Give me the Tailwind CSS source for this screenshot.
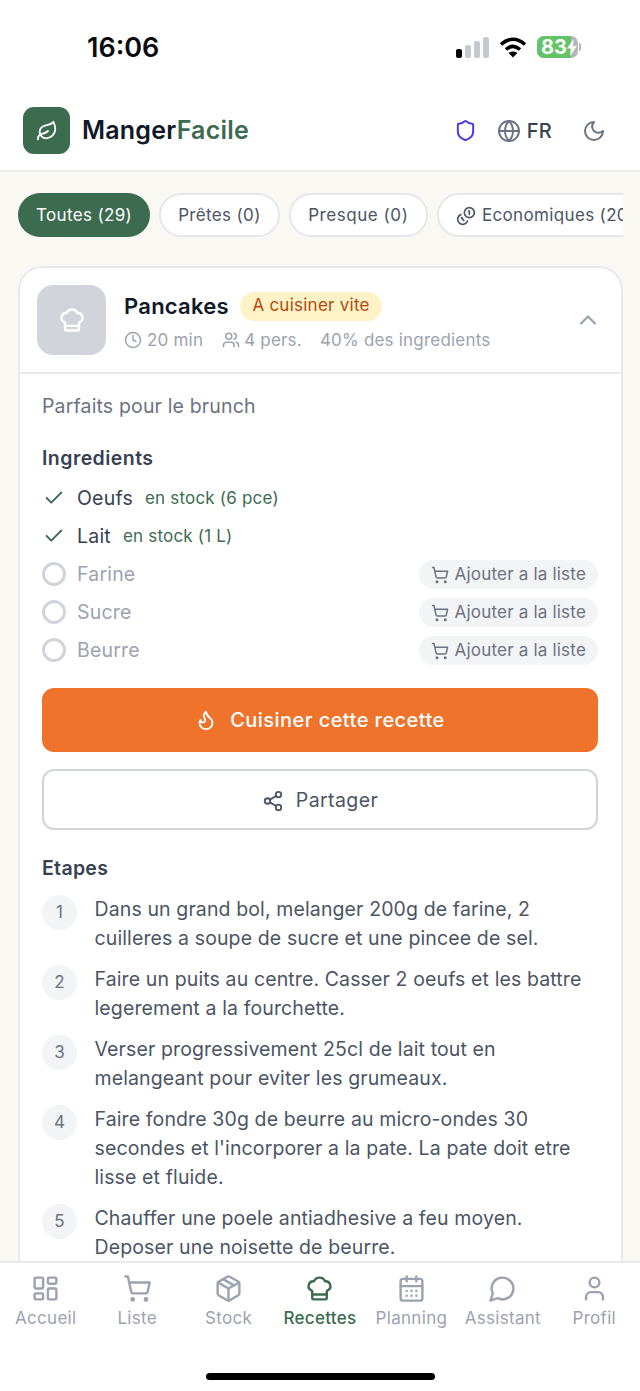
<!DOCTYPE html>
<html lang="fr">
<head>
<meta charset="utf-8">
<script src="https://cdn.jsdelivr.net/npm/@tailwindcss/browser@4"></script>
<title>MangerFacile</title>
</head>
<body class="m-0">
<div class="w-[640px] h-[1391px] flex flex-col overflow-hidden bg-white font-['Inter',sans-serif]">
  <!-- status bar -->
  <div class="h-[88px] shrink-0 relative flex items-start">
    <span class="ml-[87px] mt-[31px] text-[27px] leading-[33px] font-semibold text-[#0b0b0f]">16:06</span>
    <div class="ml-auto mr-[59px] mt-[36px] flex items-center gap-[10px]">
      <svg class="-ml-[2px]" width="33" height="21" viewBox="0 0 33 21"><rect x="0" y="12" width="6" height="9" rx="2" fill="#000"/><rect x="9" y="8" width="6" height="13" rx="2" fill="#c6c9ce"/><rect x="18" y="4" width="6" height="17" rx="2" fill="#c6c9ce"/><rect x="27" y="0" width="6" height="21" rx="2" fill="#c6c9ce"/></svg>
      <svg width="28" height="21" viewBox="0 0 28 21" fill="none" stroke="#000" stroke-width="3.6"><path d="M2 7.5C9.5 .5 18.5 .5 26 7.5"/><path d="M7 12.5c4.5-4 9.5-4 14 0"/><path d="M14 20.5l-4.4-4.6c2.7-2 6.1-2 8.8 0z" fill="#000" stroke="none"/></svg>
      <div class="flex items-center">
        <div class="relative w-[41px] h-[22px] rounded-[7px] overflow-hidden bg-[#b3b6bc] flex">
          <div class="w-[34px] h-full bg-[#62c466]"></div>
          <span class="absolute left-[4px] top-0 text-[20px] leading-[22px] font-bold text-white">83</span>
          <svg class="absolute left-[30px] top-[3px]" width="10" height="17" viewBox="0 0 10 17"><path d="M6.5 0 0 9.5h3.8L3 17l7-10H6z" fill="#fff"/></svg>
        </div>
        <div class="ml-[1px] w-[2px] h-[8px] rounded-r bg-[#b3b6bc]"></div>
      </div>
    </div>
  </div>

  <!-- header -->
  <header class="h-[84px] shrink-0 border-b-2 border-[#e9e9ec] flex items-center pl-[23px] pr-[34px] pt-[3px]">
    <div class="w-[47px] h-[47px] rounded-[11px] bg-[#3d6b50] flex items-center justify-center">
      <svg class="w-[22px] h-[22px]" viewBox="0 0 24 24" fill="none" stroke="#fff" stroke-width="2" stroke-linecap="round" stroke-linejoin="round"><path d="M11 20A7 7 0 0 1 9.8 6.1C15.5 5 17 4.48 19 2c1 2 2 4.18 2 8 0 5.5-4.78 10-10 10Z"/><path d="M2 21c0-3 1.85-5.36 5.08-6C9.5 14.52 12 13 13 12"/></svg>
    </div>
    <div class="ml-[12px] text-[25px] font-semibold leading-none text-[#111827] tracking-[0.2px]">Manger<span class="text-[#3d6b50]">Facile</span></div>
    <svg class="ml-auto w-[23px] h-[23px]" viewBox="0 0 24 24" fill="none" stroke="#4338ee" stroke-width="2" stroke-linecap="round" stroke-linejoin="round"><path d="M20 13c0 5-3.5 7.5-7.66 8.95a1 1 0 0 1-.67-.01C7.5 20.5 4 18 4 13V6a1 1 0 0 1 1-1c2 0 4.5-1.2 6.24-2.72a1.17 1.17 0 0 1 1.52 0C14.51 3.81 17 5 19 5a1 1 0 0 1 1 1z"/></svg>
    <svg class="ml-[20px] w-[24px] h-[24px]" viewBox="0 0 24 24" fill="none" stroke="#6b7280" stroke-width="1.9" stroke-linecap="round" stroke-linejoin="round"><circle cx="12" cy="12" r="10"/><path d="M12 2a14.5 14.5 0 0 0 0 20 14.5 14.5 0 0 0 0-20"/><path d="M2 12h20"/></svg>
    <span class="ml-[6px] text-[20px] font-medium leading-none text-[#374151] tracking-[0.3px]">FR</span>
    <svg class="ml-[30px] w-[24px] h-[24px]" viewBox="0 0 24 24" fill="none" stroke="#6b7280" stroke-width="2" stroke-linecap="round" stroke-linejoin="round"><path d="M12 3a6 6 0 0 0 9 9 9 9 0 1 1-9-9Z"/></svg>
  </header>

  <!-- main -->
  <main class="flex-1 min-h-0 overflow-hidden bg-[#faf8f3] pt-[21px] pl-[18px] pr-[17px]">
    <div class="flex gap-[9px] overflow-hidden h-[45px] tracking-[0.35px]">
      <div class="shrink-0 h-[44px] pt-[2px] px-[18px] rounded-full bg-[#3d6b50] text-white text-[17px] flex items-center">Toutes (29)</div>
      <div class="shrink-0 h-[44px] pt-[2px] px-[17px] rounded-full bg-white border-2 border-[#e5e7eb] text-[#4b5563] text-[17px] flex items-center">Prêtes (0)</div>
      <div class="shrink-0 h-[44px] pt-[2px] px-[17.5px] rounded-full bg-white border-2 border-[#e5e7eb] text-[#4b5563] text-[17px] tracking-[0.55px] flex items-center">Presque (0)</div>
      <div class="shrink-0 h-[44px] pt-[2px] pl-[17px] pr-[17px] rounded-full bg-white border-2 border-[#e5e7eb] text-[#4b5563] text-[17px] flex items-center gap-[6px]">
        <svg class="w-[20px] h-[20px]" viewBox="0 0 24 24" fill="none" stroke="currentColor" stroke-width="2" stroke-linecap="round" stroke-linejoin="round"><circle cx="16" cy="8" r="6"/><path d="M5.91 10.37A6 6 0 1 0 13.66 18"/><path d="M15 6h1v4"/><path d="M7.29 13.88l-.7.71 2.82 2.82"/></svg>
        Economiques (20)
      </div>
    </div>

    <!-- card -->
    <section class="mt-[28px] w-[605px] bg-white border-2 border-b-0 border-[#e8e9ed] rounded-t-[24px]">
      <div class="h-[106px] border-b-2 border-[#e8e9ed] flex items-center pl-[17px] pr-[19px]">
        <div class="w-[69px] h-[70px] rounded-[16px] bg-[#d1d5db] flex items-center justify-center">
          <svg class="w-[28px] h-[28px]" viewBox="0 0 24 24" fill="none" stroke="#fff" stroke-width="2" stroke-linecap="round" stroke-linejoin="round"><path d="M17 21a1 1 0 0 0 1-1v-5.35c0-.457.316-.844.727-1.041a4 4 0 0 0-2.134-7.589 5 5 0 0 0-9.186 0 4 4 0 0 0-2.134 7.588c.411.198.727.585.727 1.041V20a1 1 0 0 0 1 1Z"/><path d="M6 17h12"/></svg>
        </div>
        <div class="ml-[18px] flex-1 min-w-0 pt-[3px]">
          <div class="flex items-center">
            <span class="text-[22px] leading-[29px] font-semibold text-[#111827] tracking-[0.25px]">Pancakes</span>
            <span class="ml-[11px] h-[29px] px-[12.5px] rounded-full bg-[#fef3c7] text-[#b4490f] text-[17px] tracking-[0.25px] flex items-center">A cuisiner vite</span>
          </div>
          <div class="mt-[7px] flex items-center text-[17px] leading-[24px] text-[#9ca3af] tracking-[0.2px]">
            <svg class="w-[18px] h-[18px]" viewBox="0 0 24 24" fill="none" stroke="currentColor" stroke-width="2" stroke-linecap="round" stroke-linejoin="round"><circle cx="12" cy="12" r="10"/><path d="M12 6v6l4 2"/></svg>
            <span class="ml-[5px]">20 min</span>
            <svg class="ml-[19px] w-[18px] h-[18px]" viewBox="0 0 24 24" fill="none" stroke="currentColor" stroke-width="2" stroke-linecap="round" stroke-linejoin="round"><path d="M16 21v-2a4 4 0 0 0-4-4H6a4 4 0 0 0-4 4v2"/><circle cx="9" cy="7" r="4"/><path d="M22 21v-2a4 4 0 0 0-3-3.87"/><path d="M16 3.13a4 4 0 0 1 0 7.75"/></svg>
            <span class="ml-[4px]">4 pers.</span>
            <span class="ml-[18px]">40% des ingredients</span>
          </div>
        </div>
        <svg class="w-[28px] h-[28px]" viewBox="0 0 24 24" fill="none" stroke="#9ca3af" stroke-width="2" stroke-linecap="round" stroke-linejoin="round"><path d="m18 15-6-6-6 6"/></svg>
      </div>

      <div class="pl-[22px] pr-[23px] pt-[18px]">
        <p class="text-[19.5px] leading-[28px] text-[#6b7280] tracking-[0.15px]">Parfaits pour le brunch</p>

        <h3 class="mt-[24px] text-[19.5px] leading-[28px] font-semibold text-[#374151] tracking-[0.45px]">Ingredients</h3>
        <ul class="mt-[7px] flex flex-col">
          <li class="h-[38px] flex items-center">
            <svg class="ml-[1px] w-[22px] h-[22px]" viewBox="0 0 24 24" fill="none" stroke="#3d6b50" stroke-width="2" stroke-linecap="round" stroke-linejoin="round"><path d="M20 6 9 17l-5-5"/></svg>
            <span class="ml-[12px] pt-[2px] text-[19.5px] text-[#374151] tracking-[0.2px]">Oeufs</span>
            <span class="ml-[12px] pt-[2px] text-[17px] text-[#3d6b50] tracking-[0.2px]">en stock (6 pce)</span>
          </li>
          <li class="h-[38px] flex items-center">
            <svg class="ml-[1px] w-[22px] h-[22px]" viewBox="0 0 24 24" fill="none" stroke="#3d6b50" stroke-width="2" stroke-linecap="round" stroke-linejoin="round"><path d="M20 6 9 17l-5-5"/></svg>
            <span class="ml-[12px] pt-[2px] text-[19.5px] text-[#374151] tracking-[0.2px]">Lait</span>
            <span class="ml-[12px] pt-[2px] text-[17px] text-[#3d6b50] tracking-[0.2px]">en stock (1 L)</span>
          </li>
          <li class="h-[38px] flex items-center">
            <span class="w-[24px] h-[24px] rounded-full border-[3px] border-[#d1d5db]"></span>
            <span class="ml-[11px] pt-[2px] text-[19.5px] text-[#9ca3af] tracking-[0.2px]">Farine</span>
            <span class="ml-auto h-[29px] pt-[2px] pl-[12px] pr-[12px] rounded-full bg-[#f3f4f6] text-[#6b7280] text-[17px] tracking-[0.2px] flex items-center gap-[6px]">
              <svg class="w-[18px] h-[18px]" viewBox="0 0 24 24" fill="none" stroke="currentColor" stroke-width="2" stroke-linecap="round" stroke-linejoin="round"><circle cx="8" cy="21" r="1"/><circle cx="19" cy="21" r="1"/><path d="M2.05 2.05h2l2.66 12.42a2 2 0 0 0 2 1.58h9.78a2 2 0 0 0 1.95-1.57l1.65-7.43H5.12"/></svg>
              Ajouter a la liste
            </span>
          </li>
          <li class="h-[38px] flex items-center">
            <span class="w-[24px] h-[24px] rounded-full border-[3px] border-[#d1d5db]"></span>
            <span class="ml-[11px] pt-[2px] text-[19.5px] text-[#9ca3af] tracking-[0.2px]">Sucre</span>
            <span class="ml-auto h-[29px] pt-[2px] pl-[12px] pr-[12px] rounded-full bg-[#f3f4f6] text-[#6b7280] text-[17px] tracking-[0.2px] flex items-center gap-[6px]">
              <svg class="w-[18px] h-[18px]" viewBox="0 0 24 24" fill="none" stroke="currentColor" stroke-width="2" stroke-linecap="round" stroke-linejoin="round"><circle cx="8" cy="21" r="1"/><circle cx="19" cy="21" r="1"/><path d="M2.05 2.05h2l2.66 12.42a2 2 0 0 0 2 1.58h9.78a2 2 0 0 0 1.95-1.57l1.65-7.43H5.12"/></svg>
              Ajouter a la liste
            </span>
          </li>
          <li class="h-[38px] flex items-center">
            <span class="w-[24px] h-[24px] rounded-full border-[3px] border-[#d1d5db]"></span>
            <span class="ml-[11px] pt-[2px] text-[19.5px] text-[#9ca3af] tracking-[0.2px]">Beurre</span>
            <span class="ml-auto h-[29px] pt-[2px] pl-[12px] pr-[12px] rounded-full bg-[#f3f4f6] text-[#6b7280] text-[17px] tracking-[0.2px] flex items-center gap-[6px]">
              <svg class="w-[18px] h-[18px]" viewBox="0 0 24 24" fill="none" stroke="currentColor" stroke-width="2" stroke-linecap="round" stroke-linejoin="round"><circle cx="8" cy="21" r="1"/><circle cx="19" cy="21" r="1"/><path d="M2.05 2.05h2l2.66 12.42a2 2 0 0 0 2 1.58h9.78a2 2 0 0 0 1.95-1.57l1.65-7.43H5.12"/></svg>
              Ajouter a la liste
            </span>
          </li>
        </ul>

        <div class="mt-[19px] h-[64px] rounded-[12px] bg-[#f0732c] text-white text-[20px] tracking-[0.45px] font-medium flex items-center justify-center gap-[13px]">
          <svg class="w-[22px] h-[22px]" viewBox="0 0 24 24" fill="none" stroke="#fff" stroke-width="2" stroke-linecap="round" stroke-linejoin="round"><path d="M8.5 14.5A2.5 2.5 0 0 0 11 12c0-1.38-.5-2-1-3-1.072-2.143-.224-4.054 2-6 .5 2.5 2 4.9 4 6.5 2 1.6 3 3.5 3 5.5a7 7 0 1 1-14 0c0-1.153.433-2.294 1-3a2.5 2.5 0 0 0 2.5 2.5z"/></svg>
          Cuisiner cette recette
        </div>
        <div class="mt-[17px] h-[61px] pt-[2px] rounded-[12px] bg-white border-2 border-[#d1d5db] text-[#4b5563] text-[19.5px] tracking-[0.4px] flex items-center justify-center gap-[12px]">
          <svg class="w-[22px] h-[22px]" viewBox="0 0 24 24" fill="none" stroke="currentColor" stroke-width="2" stroke-linecap="round" stroke-linejoin="round"><circle cx="18" cy="5" r="3"/><circle cx="6" cy="12" r="3"/><circle cx="18" cy="19" r="3"/><path d="M8.59 13.51 15.42 17.49"/><path d="M15.41 6.51 8.59 10.49"/></svg>
          Partager
        </div>

        <h3 class="mt-[24px] text-[19.5px] leading-[28px] font-semibold text-[#374151] tracking-[0.3px]">Etapes</h3>
        <ol class="mt-[13px] flex flex-col gap-[12px] text-[19.5px] leading-[29px] text-[#4b5563] tracking-[0.12px]">
          <li class="flex gap-[17.5px]">
            <span class="shrink-0 w-[35px] h-[35px] rounded-full bg-[#f3f4f6] text-[#6b7280] text-[17px] flex items-center justify-center">1</span>
            <span>Dans un grand bol, melanger 200g de farine, 2 cuilleres a soupe de sucre et une pincee de sel.</span>
          </li>
          <li class="flex gap-[17.5px]">
            <span class="shrink-0 w-[35px] h-[35px] rounded-full bg-[#f3f4f6] text-[#6b7280] text-[17px] flex items-center justify-center">2</span>
            <span>Faire un puits au centre. Casser 2 oeufs et les battre legerement a la fourchette.</span>
          </li>
          <li class="flex gap-[17.5px]">
            <span class="shrink-0 w-[35px] h-[35px] rounded-full bg-[#f3f4f6] text-[#6b7280] text-[17px] flex items-center justify-center">3</span>
            <span>Verser progressivement 25cl de lait tout en melangeant pour eviter les grumeaux.</span>
          </li>
          <li class="flex gap-[17.5px]">
            <span class="shrink-0 w-[35px] h-[35px] rounded-full bg-[#f3f4f6] text-[#6b7280] text-[17px] flex items-center justify-center">4</span>
            <span>Faire fondre 30g de beurre au micro-ondes 30 secondes et l'incorporer a la pate. La pate doit etre lisse et fluide.</span>
          </li>
          <li class="flex gap-[17.5px]">
            <span class="shrink-0 w-[35px] h-[35px] rounded-full bg-[#f3f4f6] text-[#6b7280] text-[17px] flex items-center justify-center">5</span>
            <span>Chauffer une poele antiadhesive a feu moyen. Deposer une noisette de beurre.</span>
          </li>
        </ol>
      </div>
    </section>
  </main>

  <!-- bottom nav -->
  <nav class="h-[130px] shrink-0 bg-white border-t-2 border-[#e9e9ec] relative">
    <div class="grid grid-cols-7 pt-[11px] text-[17px] leading-[24px] text-[#9ca3af] tracking-[0.3px]">
      <div class="flex flex-col items-center gap-[3px]">
        <svg class="w-[29px] h-[29px]" viewBox="0 0 24 24" fill="none" stroke="currentColor" stroke-width="2" stroke-linecap="round" stroke-linejoin="round"><rect x="3" y="3" width="7" height="9" rx="1"/><rect x="14" y="3" width="7" height="5" rx="1"/><rect x="14" y="12" width="7" height="9" rx="1"/><rect x="3" y="16" width="7" height="5" rx="1"/></svg>
        <span>Accueil</span>
      </div>
      <div class="flex flex-col items-center gap-[3px]">
        <svg class="w-[29px] h-[29px]" viewBox="0 0 24 24" fill="none" stroke="currentColor" stroke-width="2" stroke-linecap="round" stroke-linejoin="round"><circle cx="8" cy="21" r="1"/><circle cx="19" cy="21" r="1"/><path d="M2.05 2.05h2l2.66 12.42a2 2 0 0 0 2 1.58h9.78a2 2 0 0 0 1.95-1.57l1.65-7.43H5.12"/></svg>
        <span>Liste</span>
      </div>
      <div class="flex flex-col items-center gap-[3px]">
        <svg class="w-[29px] h-[29px]" viewBox="0 0 24 24" fill="none" stroke="currentColor" stroke-width="2" stroke-linecap="round" stroke-linejoin="round"><path d="M11 21.73a2 2 0 0 0 2 0l7-4A2 2 0 0 0 21 16V8a2 2 0 0 0-1-1.73l-7-4a2 2 0 0 0-2 0l-7 4A2 2 0 0 0 3 8v8a2 2 0 0 0 1 1.73z"/><path d="M12 22V12"/><path d="M3.29 7 12 12 20.71 7"/><path d="m7.5 4.27 9 5.15"/></svg>
        <span>Stock</span>
      </div>
      <div class="flex flex-col items-center gap-[3px] text-[#3d6b50] font-medium">
        <svg class="w-[29px] h-[29px]" viewBox="0 0 24 24" fill="none" stroke="currentColor" stroke-width="2" stroke-linecap="round" stroke-linejoin="round"><path d="M17 21a1 1 0 0 0 1-1v-5.35c0-.457.316-.844.727-1.041a4 4 0 0 0-2.134-7.589 5 5 0 0 0-9.186 0 4 4 0 0 0-2.134 7.588c.411.198.727.585.727 1.041V20a1 1 0 0 0 1 1Z"/><path d="M6 17h12"/></svg>
        <span>Recettes</span>
      </div>
      <div class="flex flex-col items-center gap-[3px]">
        <svg class="w-[29px] h-[29px]" viewBox="0 0 24 24" fill="none" stroke="currentColor" stroke-width="2" stroke-linecap="round" stroke-linejoin="round"><path d="M8 2v4"/><path d="M16 2v4"/><rect x="3" y="4" width="18" height="18" rx="2"/><path d="M3 10h18"/><path d="M8 14h.01"/><path d="M12 14h.01"/><path d="M16 14h.01"/><path d="M8 18h.01"/><path d="M12 18h.01"/><path d="M16 18h.01"/></svg>
        <span>Planning</span>
      </div>
      <div class="flex flex-col items-center gap-[3px]">
        <svg class="w-[29px] h-[29px]" viewBox="0 0 24 24" fill="none" stroke="currentColor" stroke-width="2" stroke-linecap="round" stroke-linejoin="round"><path d="M7.9 20A9 9 0 1 0 4 16.1L2 22Z"/></svg>
        <span>Assistant</span>
      </div>
      <div class="flex flex-col items-center gap-[3px]">
        <svg class="w-[29px] h-[29px]" viewBox="0 0 24 24" fill="none" stroke="currentColor" stroke-width="2" stroke-linecap="round" stroke-linejoin="round"><path d="M19 21v-2a4 4 0 0 0-4-4H9a4 4 0 0 0-4 4v2"/><circle cx="12" cy="7" r="4"/></svg>
        <span>Profil</span>
      </div>
    </div>
    <div class="absolute left-[206px] top-[110px] w-[229px] h-[7px] rounded-full bg-black"></div>
  </nav>
</div>
</body>
</html>
